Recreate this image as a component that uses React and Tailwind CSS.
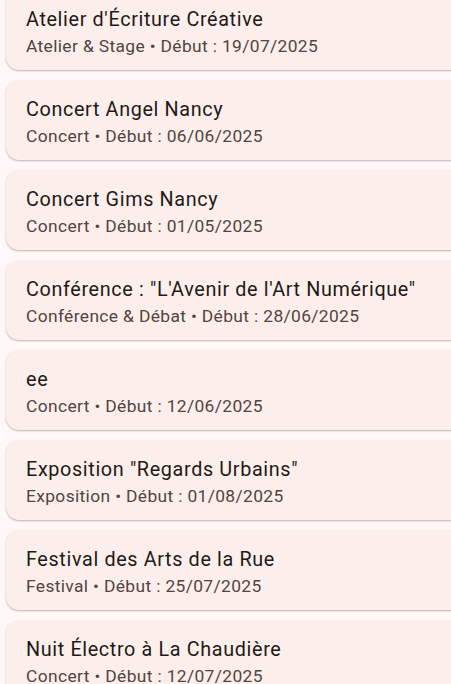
const events = [
  { title: "Atelier d'Écriture Créative", type: "Atelier & Stage", date: "19/07/2025" },
  { title: "Concert Angel Nancy", type: "Concert", date: "06/06/2025" },
  { title: "Concert Gims Nancy", type: "Concert", date: "01/05/2025" },
  { title: 'Conférence : "L\'Avenir de l\'Art Numérique"', type: "Conférence & Débat", date: "28/06/2025" },
  { title: "ee", type: "Concert", date: "12/06/2025" },
  { title: 'Exposition "Regards Urbains"', type: "Exposition", date: "01/08/2025" },
  { title: "Festival des Arts de la Rue", type: "Festival", date: "25/07/2025" },
  { title: "Nuit Électro à La Chaudière", type: "Concert", date: "12/07/2025" },
];

export default function App() {
  return (
    <div className="w-[451px] h-[684px] overflow-hidden bg-[#fff8f6] font-['Roboto',sans-serif]">
      <div className="flex flex-col gap-[10px] -mt-[10px] pl-[6px]">
        {events.map((ev, i) => (
          <div
            key={i}
            className="w-[470px] h-[80px] shrink-0 rounded-[13px] bg-[#fcefeb] shadow-[0_1px_2px_rgba(0,0,0,0.28)] pl-[20px] pt-[4px] flex flex-col justify-center font-[370]"
          >
            <div className="text-[19.8px] leading-[29px] tracking-[0.64px] text-[#231917] whitespace-nowrap">
              {ev.title}
            </div>
            <div className="text-[17.4px] leading-[25px] tracking-[0.36px] text-[#534341] whitespace-nowrap">
              {ev.type} • Début : {ev.date}
            </div>
          </div>
        ))}
      </div>
    </div>
  );
}
